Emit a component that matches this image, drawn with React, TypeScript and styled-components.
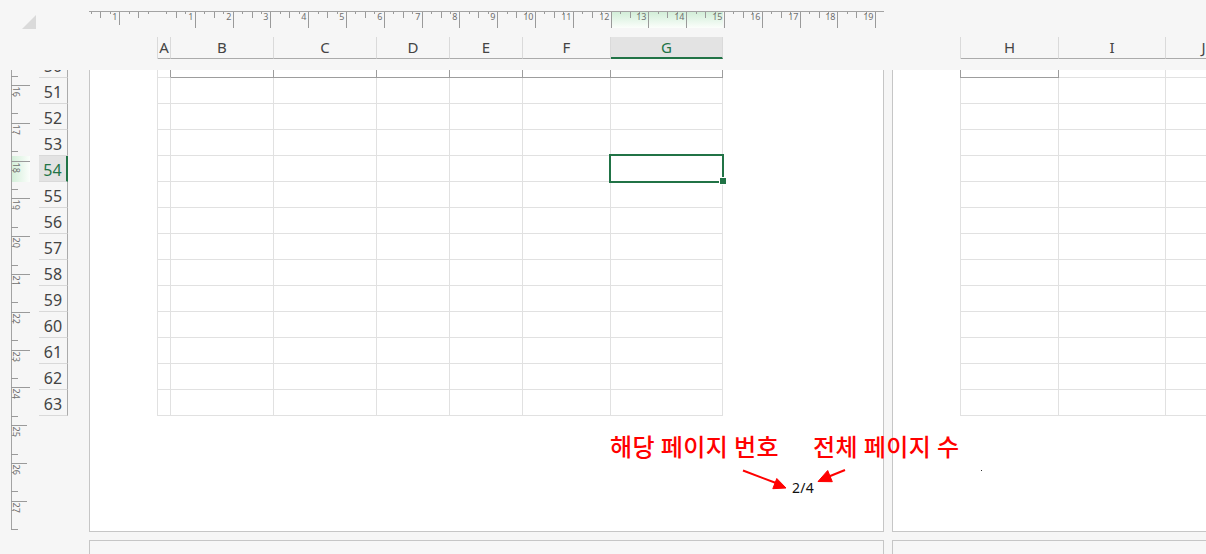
import React from "react";
import styled, { createGlobalStyle, css } from "styled-components";

const GlobalStyle = createGlobalStyle`
  html, body { margin: 0; padding: 0; background: #f6f6f6; }
  body { font-family: "Noto Sans", "Open Sans", sans-serif; }
  #root { width: 1206px; height: 554px; }
`;

const GREEN = "#217346";
const CM = 37.8;
const Q = CM / 4;
const GRID_LIGHT = "#e1e1e1";
const GRID_DARK = "#9d9d9d";

type Col = { label: string; w: number; strong?: boolean; selected?: boolean };

const PAGE1_COLS: Col[] = [
  { label: "A", w: 13 },
  { label: "B", w: 103, strong: true },
  { label: "C", w: 103, strong: true },
  { label: "D", w: 73, strong: true },
  { label: "E", w: 73, strong: true },
  { label: "F", w: 88, strong: true },
  { label: "G", w: 112, strong: true, selected: true },
];

const PAGE2_COLS: Col[] = [
  { label: "H", w: 98, strong: true },
  { label: "I", w: 107 },
  { label: "J", w: 76 },
  { label: "K", w: 90 },
];

const ROWS = Array.from({ length: 14 }, (_, i) => 50 + i);
const SELECTED_ROW = 54;

const Screen = styled.div`
  position: relative;
  width: 1206px;
  height: 554px;
  overflow: hidden;
  background: #f6f6f6;
  display: flex;
  flex-direction: column;
`;

const TopBand = styled.div`
  flex: 0 0 70px;
  display: flex;
  flex-direction: column;
`;

const RulerRow = styled.div`
  display: flex;
  flex: 0 0 37px;
  height: 37px;
`;

const Corner = styled.div`
  flex: 0 0 89px;
  width: 89px;
  box-sizing: border-box;
  padding: 15px 0 0 22px;
`;

const HeaderRow = styled.div`
  display: flex;
  flex: 0 0 22px;
  height: 22px;
`;

const HeaderGroup = styled.div<{ $offset: number }>`
  display: flex;
  flex-shrink: 0;
  margin-left: ${(p) => p.$offset}px;
  border-left: 1px solid #dadada;
`;

const ColHeader = styled.div<{ $w: number; $selected?: boolean }>`
  box-sizing: border-box;
  flex: 0 0 ${(p) => p.$w}px;
  width: ${(p) => p.$w}px;
  height: 22px;
  border-right: 1px solid #dadada;
  border-bottom: 1px solid #ababab;
  font: 15px/21px "Noto Sans", sans-serif;
  color: #444;
  text-align: center;
  ${(p) =>
    p.$selected &&
    css`
      background: #e3e3e3;
      color: ${GREEN};
      border-bottom: 2px solid ${GREEN};
      line-height: 20px;
    `}
`;

const Body = styled.div`
  flex: 1 1 auto;
  min-height: 0;
  display: flex;
  overflow: hidden;
`;

const LeftRulerBox = styled.div`
  flex: 0 0 36px;
  width: 36px;
`;

const RowHeaderCol = styled.div`
  flex: 0 0 29px;
  width: 29px;
  margin-left: 3px;
  margin-top: -18px;
  align-self: flex-start;
  display: flex;
  flex-direction: column;
`;

const RowHeader = styled.div<{ $selected?: boolean }>`
  box-sizing: border-box;
  height: 26px;
  padding-top: 3px;
  border-bottom: 1px solid #d9d9d9;
  border-right: 1px solid #ababab;
  font: 16px/22px "Noto Sans", sans-serif;
  color: #444;
  text-align: center;
  ${(p) =>
    p.$selected &&
    css`
      background: #e3e3e3;
      color: ${GREEN};
      border-right: 2px solid ${GREEN};
    `}
`;

const PagesArea = styled.div`
  flex-shrink: 0;
  margin-left: 21px;
  margin-top: -50px;
  display: flex;
  flex-direction: column;
  gap: 8px;
`;

const PageRow = styled.div`
  display: flex;
  gap: 8px;
`;

const Page = styled.div<{ $blank?: boolean }>`
  position: relative;
  box-sizing: border-box;
  flex: 0 0 795px;
  width: 795px;
  height: 512px;
  border: 1px solid #c6c6c6;
  background: ${(p) => (p.$blank ? "#f7f7f7" : "#ffffff")};
  padding: 31px 0 0 67px;
  display: flex;
  flex-direction: column;
`;

const Grid = styled.div`
  position: relative;
  align-self: flex-start;
  display: flex;
  flex-direction: column;
`;

const GridRow = styled.div<{ $darkLeft?: boolean }>`
  display: flex;
  border-left: 1px solid ${(p) => (p.$darkLeft ? GRID_DARK : GRID_LIGHT)};
`;

const Cell = styled.div<{ $w: number; $darkRight?: boolean; $darkBottom?: boolean }>`
  box-sizing: border-box;
  flex: 0 0 ${(p) => p.$w}px;
  width: ${(p) => p.$w}px;
  height: 26px;
  border-right: 1px solid ${(p) => (p.$darkRight ? GRID_DARK : GRID_LIGHT)};
  border-bottom: 1px solid ${(p) => (p.$darkBottom ? GRID_DARK : GRID_LIGHT)};
`;

const Selection = styled.div`
  position: absolute;
  left: 452px;
  top: 102px;
  width: 115px;
  height: 29px;
  box-sizing: border-box;
  border: 2px solid ${GREEN};
`;

const FillHandle = styled.div`
  position: absolute;
  left: 563px;
  top: 126px;
  width: 6px;
  height: 6px;
  background: ${GREEN};
  box-shadow: 0 0 0 1px #ffffff;
`;

const Footer = styled.div`
  margin-top: auto;
  margin-bottom: 34px;
  padding-right: 69px;
  text-align: right;
  font: 14px/19px "Noto Sans", sans-serif;
  letter-spacing: 0.3px;
  color: #111;
`;

const Overlay = styled.svg`
  position: absolute;
  left: 0;
  top: 0;
  pointer-events: none;
`;

const Callout = styled.span<{ $x: number }>`
  position: absolute;
  left: ${(p) => p.$x}px;
  top: 434px;
  font: 500 24px/24px "Noto Sans CJK KR", "Noto Sans", sans-serif;
  letter-spacing: 0.4px;
  color: #ff0000;
  white-space: nowrap;
  pointer-events: none;
`;

function TopRuler() {
  const width = 795;
  const origin = 68;
  const lines: React.ReactNode[] = [];
  const labels: React.ReactNode[] = [];
  for (let k = -7; ; k++) {
    const pos = origin + k * Q;
    if (pos > width - 2) break;
    if (k === 0) continue;
    const x = Math.round(pos) + 0.5;
    let y2 = 14;
    if (k % 4 === 0) {
      y2 = k < 0 ? 25 : 28;
      labels.push(
        <text key={`l${k}`} x={Math.round(pos) - 1.5} y={19.5} textAnchor="end">
          {Math.abs(k / 4)}
        </text>
      );
    } else if (k % 2 === 0) {
      y2 = 18;
    }
    lines.push(<line key={k} x1={x} x2={x} y1={12} y2={y2} />);
  }
  return (
    <svg width={width} height={37} style={{ display: "block", flexShrink: 0 }}>
      <defs>
        <linearGradient id="rulerHiTop" x1="0" y1="0" x2="0" y2="1">
          <stop offset="0" stopColor="#d2eed8" />
          <stop offset="1" stopColor="#fbfefb" />
        </linearGradient>
      </defs>
      <rect x={522} y={12} width={112} height={16} fill="url(#rulerHiTop)" />
      <line x1={0} x2={width} y1={11.5} y2={11.5} stroke="#a3a3a3" />
      <g stroke="#9a9a9a" strokeWidth={1}>{lines}</g>
      <g fontFamily='"Noto Sans", sans-serif' fontSize={9} fill="#6f6f6f">
        {labels}
      </g>
    </svg>
  );
}

function LeftRuler() {
  const lines: React.ReactNode[] = [];
  const labels: React.ReactNode[] = [];
  for (let j = -1; ; j++) {
    const pos = 15 + j * Q;
    if (pos > 460) break;
    const y = Math.round(pos) + 0.5;
    const m = ((j % 4) + 4) % 4;
    if (m === 0) {
      const n = 16 + j / 4;
      lines.push(<line key={j} x1={11} x2={n >= 25 ? 27 : 30} y1={y} y2={y} />);
      labels.push(
        <text key={`t${j}`} transform={`translate(12.5 ${Math.round(pos) + 1.5}) rotate(90)`}>
          {n}
        </text>
      );
    } else if (m === 1) {
      lines.push(<line key={j} x1={11} x2={14} y1={y} y2={y} />);
    } else if (m === 3) {
      lines.push(<line key={j} x1={11} x2={18} y1={y} y2={y} />);
    }
  }
  return (
    <svg width={36} height={484} style={{ display: "block" }}>
      <defs>
        <linearGradient id="rulerHiLeft" x1="0" y1="0" x2="1" y2="0">
          <stop offset="0" stopColor="#d2eed8" />
          <stop offset="1" stopColor="#fbfefb" />
        </linearGradient>
      </defs>
      <rect x={11} y={86} width={19} height={26} fill="url(#rulerHiLeft)" />
      <line x1={11.5} x2={11.5} y1={0} y2={460} stroke="#a3a3a3" />
      <g stroke="#9a9a9a">{lines}</g>
      <g fontFamily='"Noto Sans", sans-serif' fontSize={9} fill="#6f6f6f">
        {labels}
      </g>
    </svg>
  );
}

function SheetGrid({ cols, children }: { cols: Col[]; children?: React.ReactNode }) {
  return (
    <Grid>
      {ROWS.map((r) => {
        const first = r === 50;
        return (
          <GridRow key={r} $darkLeft={first && !!cols[0].strong}>
            {cols.map((c, i) => {
              const next = cols[i + 1];
              return (
                <Cell
                  key={c.label}
                  $w={c.w}
                  $darkRight={first && (!!c.strong || !!next?.strong)}
                  $darkBottom={first && !!c.strong}
                />
              );
            })}
          </GridRow>
        );
      })}
      {children}
    </Grid>
  );
}

export default function App() {
  return (
    <>
      <GlobalStyle />
      <Screen>
        <TopBand>
          <RulerRow>
            <Corner>
              <svg width={14} height={14} style={{ display: "block" }}>
                <polygon points="14,0 14,14 0,14" fill="#dadada" />
              </svg>
            </Corner>
            <TopRuler />
          </RulerRow>
          <HeaderRow>
            <HeaderGroup $offset={157}>
              {PAGE1_COLS.map((c) => (
                <ColHeader key={c.label} $w={c.w} $selected={c.selected}>
                  {c.label}
                </ColHeader>
              ))}
            </HeaderGroup>
            <HeaderGroup $offset={237}>
              {PAGE2_COLS.map((c) => (
                <ColHeader key={c.label} $w={c.w}>
                  {c.label}
                </ColHeader>
              ))}
            </HeaderGroup>
          </HeaderRow>
        </TopBand>
        <Body>
          <LeftRulerBox>
            <LeftRuler />
          </LeftRulerBox>
          <RowHeaderCol>
            {ROWS.map((r) => (
              <RowHeader key={r} $selected={r === SELECTED_ROW}>
                {r}
              </RowHeader>
            ))}
          </RowHeaderCol>
          <PagesArea>
            <PageRow>
              <Page>
                <SheetGrid cols={PAGE1_COLS}>
                  <Selection />
                  <FillHandle />
                </SheetGrid>
                <Footer>2/4</Footer>
              </Page>
              <Page>
                <SheetGrid cols={PAGE2_COLS} />
              </Page>
            </PageRow>
            <PageRow>
              <Page $blank />
              <Page $blank />
            </PageRow>
          </PagesArea>
        </Body>

        <Callout $x={610}>해당 페이지 번호</Callout>
        <Callout $x={813}>전체 페이지 수</Callout>
        <Overlay width={1206} height={554}>
          <g fill="#ff0000" stroke="#ff0000">
            <line x1={743} y1={470.5} x2={776} y2={483} strokeWidth={2} />
            <polygon points="786,488 772.8,488.7 776.8,478.5" strokeWidth={1} />
            <line x1={845} y1={470} x2={829} y2={476.5} strokeWidth={2} />
            <polygon points="818,481.5 832.3,481.7 827.7,470.5" strokeWidth={1} />
          </g>
          <rect x={981} y={470} width={1} height={1} fill="#333" />
        </Overlay>
      </Screen>
    </>
  );
}
